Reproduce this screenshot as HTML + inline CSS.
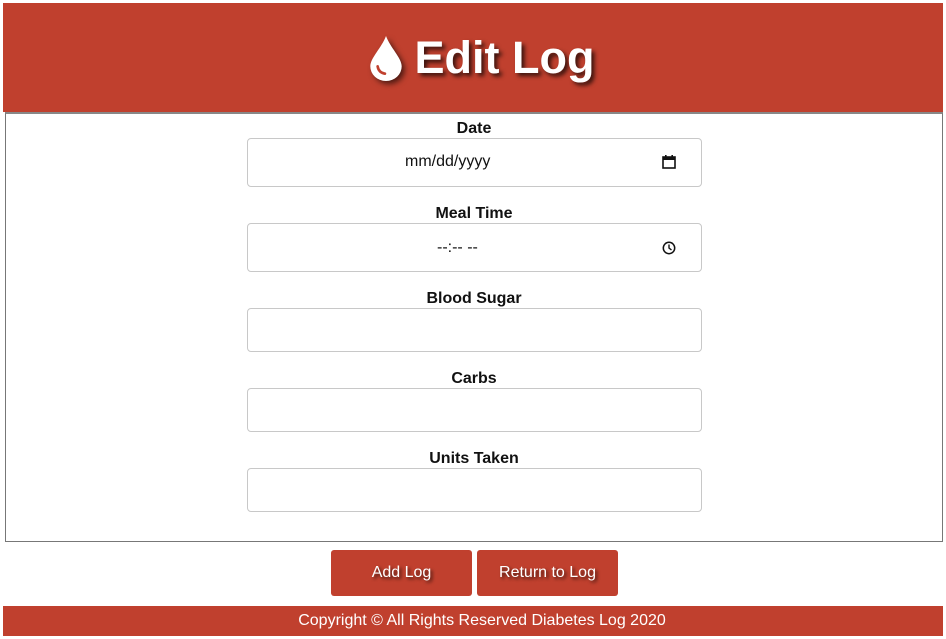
<!DOCTYPE html>
<html><head><meta charset="utf-8"><style>
*{box-sizing:border-box;margin:0;padding:0}
body{width:946px;height:639px;background:#fff;font-family:"Liberation Sans",Arial,sans-serif;position:relative;overflow:hidden}
.hdr{position:absolute;left:3px;top:3px;width:940px;height:109px;background:#c0402e;color:#fff;text-align:center}
.hdr h1{font-size:45px;font-weight:bold;line-height:109px;text-shadow:3px 3px 4px rgba(0,0,0,.7);display:flex;justify-content:center;align-items:center;gap:11px;padding-left:16px}
.box{position:absolute;left:5px;top:112px;width:938px;height:430px;border:1px solid #777;border-top:2px solid #888}
.lbl{position:absolute;left:1px;width:946px;text-align:center;font-weight:bold;font-size:16px;color:#111}
.inp{position:absolute;left:247px;width:455px;border:1px solid #c8c8c8;border-radius:4px;background:#fff;font-size:16px;color:#111}
.btn{position:absolute;top:550px;height:46px;background:#c0402e;border-radius:3px;color:#fff;font-size:16px;text-align:center;line-height:46px;text-shadow:2px 2px 3px rgba(0,0,0,.7)}
.ftr{position:absolute;left:3px;top:606px;width:940px;height:30px;background:#c0402e;color:#fff;text-align:center;font-size:16px;line-height:30px;padding-left:18px}
</style></head><body>
<div class="hdr"><h1><svg width="36" height="46" viewBox="0 0 34 44" style="filter:drop-shadow(3px 3px 3px rgba(0,0,0,.6))"><path d="M17 1C13 12 2 22 2 30a15 14 0 0 0 30 0C32 22 21 12 17 1Z" fill="#fff"/><path d="M9 30q1 6 7 7" stroke="#c0402e" stroke-width="2.5" fill="none" stroke-linecap="round"/></svg><span>Edit Log</span></h1></div>
<div class="box"></div>
<div class="lbl" style="top:120px">Date</div>
<div class="inp" style="top:138px;height:49px"><span style="position:absolute;left:157px;top:14px">mm/dd/yyyy</span>
<svg style="position:absolute;left:413px;top:15px" width="16" height="16" viewBox="0 0 16 16"><rect x="2" y="3" width="12" height="11" fill="none" stroke="#111" stroke-width="1.6"/><rect x="2" y="3" width="12" height="3" fill="#111"/><rect x="4" y="1" width="1.6" height="3" fill="#111"/><rect x="10.4" y="1" width="1.6" height="3" fill="#111"/></svg></div>
<div class="lbl" style="top:205px">Meal Time</div>
<div class="inp" style="top:223px;height:49px"><span style="position:absolute;left:189px;top:15px">--:-- --</span>
<svg style="position:absolute;left:414px;top:17px" width="14" height="14" viewBox="0 0 14 14"><circle cx="7" cy="7" r="5.7" fill="none" stroke="#111" stroke-width="1.5"/><path d="M7 3.5V7l2.5 2" stroke="#111" stroke-width="1.4" fill="none"/></svg></div>
<div class="lbl" style="top:290px">Blood Sugar</div>
<div class="inp" style="top:308px;height:44px"></div>
<div class="lbl" style="top:370px">Carbs</div>
<div class="inp" style="top:388px;height:44px"></div>
<div class="lbl" style="top:450px">Units Taken</div>
<div class="inp" style="top:468px;height:44px"></div>
<div class="btn" style="left:331px;width:141px">Add Log</div>
<div class="btn" style="left:477px;width:141px">Return to Log</div>
<div class="ftr">Copyright © All Rights Reserved Diabetes Log 2020</div>
</body></html>
